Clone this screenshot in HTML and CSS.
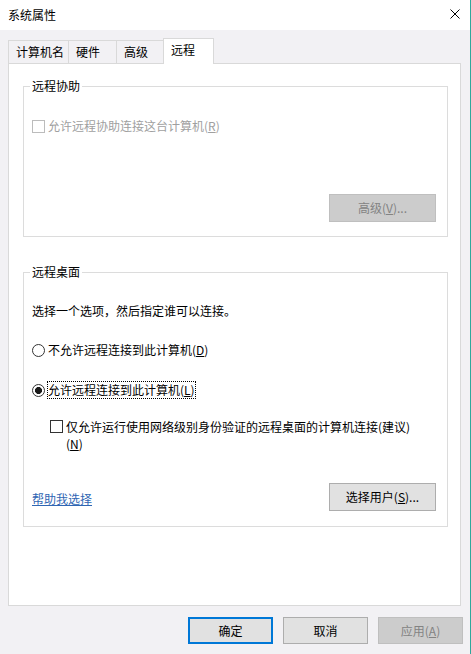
FILE: index.html
```html
<!DOCTYPE html>
<html lang="zh-CN">
<head>
<meta charset="utf-8">
<title>系统属性</title>
<link rel="stylesheet" href="styles.css">
</head>
<body>
<div class="window">
  <div class="titlebar">
    <span class="title">系统属性</span>
    <svg class="close" width="10" height="10" viewBox="0 0 10 10"><path d="M0.5 0.5L9.5 9.5M9.5 0.5L0.5 9.5" stroke="#000" stroke-width="1" fill="none"/></svg>
  </div>
  <div class="main">
    <div class="tabs">
      <div class="tab t1">计算机名</div>
      <div class="tab t2">硬件</div>
      <div class="tab t3">高级</div>
      <div class="tab active">远程</div>
    </div>
    <div class="panel">
      <div class="group g1">
        <span class="legend">远程协助</span>
        <div class="check disabled"><span class="box"></span><span>允许远程协助连接这台计算机(<u>R</u>)</span></div>
        <div class="btnrow"><button class="btn wide disabled">高级(<u>V</u>)...</button></div>
      </div>
      <div class="group g2">
        <span class="legend">远程桌面</span>
        <div class="desc">选择一个选项，然后指定谁可以连接。</div>
        <div class="radio r1"><span class="dot"></span><span>不允许远程连接到此计算机(<u>D</u>)</span></div>
        <div class="radio r2"><span class="dot on"></span><span class="focus">允许远程连接到此计算机(<u>L</u>)</span></div>
        <div class="check nla"><span class="box"></span><span>仅允许运行使用网络级别身份验证的远程桌面的计算机连接(建议)<br>(<u>N</u>)</span></div>
        <div class="bottomrow">
          <a class="link" href="#">帮助我选择</a>
          <button class="btn wide">选择用户(<u>S</u>)...</button>
        </div>
      </div>
    </div>
    <div class="actions">
      <button class="btn act default">确定</button>
      <button class="btn act">取消</button>
      <button class="btn act disabled">应用(<u>A</u>)</button>
    </div>
  </div>
</div>
</body>
</html>
```
FILE: styles.css
```css
* { box-sizing: border-box; }
html, body { margin: 0; padding: 0; }
body {
  font-family: "Noto Sans CJK SC", "Microsoft YaHei", sans-serif;
  font-size: 12px;
  color: #000;
  background: #f2f1f4;
}
.window {
  width: 471px;
  height: 654px;
  border-right: 1px solid #2fa89c;
  display: flex;
  flex-direction: column;
  background: #f2f1f4;
}
.titlebar {
  height: 30px;
  background: #fff;
  display: flex;
  align-items: center;
  justify-content: space-between;
  padding: 0 10px 0 8px;
}
.title { line-height: 16px; }
.close { margin-bottom: 2px; }
.main {
  flex: 1;
  display: flex;
  flex-direction: column;
  padding: 8px 7px 0 8px;
}
.tabs {
  display: flex;
  align-items: flex-end;
  height: 25px;
}
.tab {
  height: 23px;
  border: 1px solid #d9d9d9;
  border-bottom: none;
  border-right: none;
  padding-left: 7px;
  line-height: 22px;
  background: #f2f1f4;
  white-space: nowrap;
}
.t1 { width: 60px; }
.t2 { width: 48px; }
.t3 { width: 47px; }
.tab.active {
  width: 51px;
  height: 26px;
  margin-bottom: -1px;
  background: #fff;
  border-right: 1px solid #d9d9d9;
  padding-left: 7px;
  position: relative;
  z-index: 1;
}
.panel {
  width: 453px;
  height: 543px;
  background: #fff;
  border: 1px solid #d9d9d9;
  padding: 22px 12px 0 14px;
}
.group {
  position: relative;
  border: 1px solid #dcdcdc;
  padding: 0 11px 14px 8px;
}
.legend {
  position: absolute;
  top: -9px;
  left: 6px;
  padding: 0 2px;
  background: #fff;
  line-height: 16px;
}
.g1 { padding-top: 31px; }
.g2 { margin-top: 35px; padding-bottom: 15px; }
.check, .radio {
  display: flex;
  align-items: center;
  line-height: 16px;
}
.box {
  width: 13px;
  height: 13px;
  border: 1px solid #333;
  background: #fff;
  margin-right: 3px;
  flex: none;
}
.check.disabled { color: #a0a0a0; }
.check.disabled .box { border-color: #bcbcbc; }
.btnrow {
  display: flex;
  justify-content: flex-end;
  margin-top: 60px;
}
.btn {
  font: inherit;
  color: #000;
  height: 28px;
  border: 1px solid #adadad;
  background: #e1e1e1;
  padding: 0;
  line-height: 16px;
}
.btn.wide { width: 107px; }
.btn.disabled {
  background: #cccccc;
  border-color: #bfbfbf;
  color: #838383;
}
.desc { margin-top: 30px; line-height: 16px; }
.r1 { margin-top: 23px; }
.r2 { margin-top: 24px; }
.dot {
  width: 13px;
  height: 13px;
  border: 1px solid #333;
  border-radius: 50%;
  background: #fff;
  margin-right: 3px;
  flex: none;
}
.dot.on {
  background: radial-gradient(circle, #1a1a1a 0 3.2px, #fff 3.8px);
}
.focus { outline: 1px dotted #000; }
.check.nla {
  margin-top: 20px;
  margin-left: 18px;
  align-items: flex-start;
  line-height: 17px;
}
.check.nla .box { margin-top: 2px; }
.bottomrow {
  margin-top: 31px;
  display: flex;
  justify-content: space-between;
  align-items: center;
}
.link {
  color: #2f66b3;
  text-decoration: underline;
  margin-top: 4px;
  line-height: 16px;
}
.actions {
  display: flex;
  justify-content: flex-end;
  gap: 10px;
  margin-top: 11px;
}
.btn.act { width: 85px; height: 27px; }
.btn.default { border: 2px solid #0078d7; }
```
